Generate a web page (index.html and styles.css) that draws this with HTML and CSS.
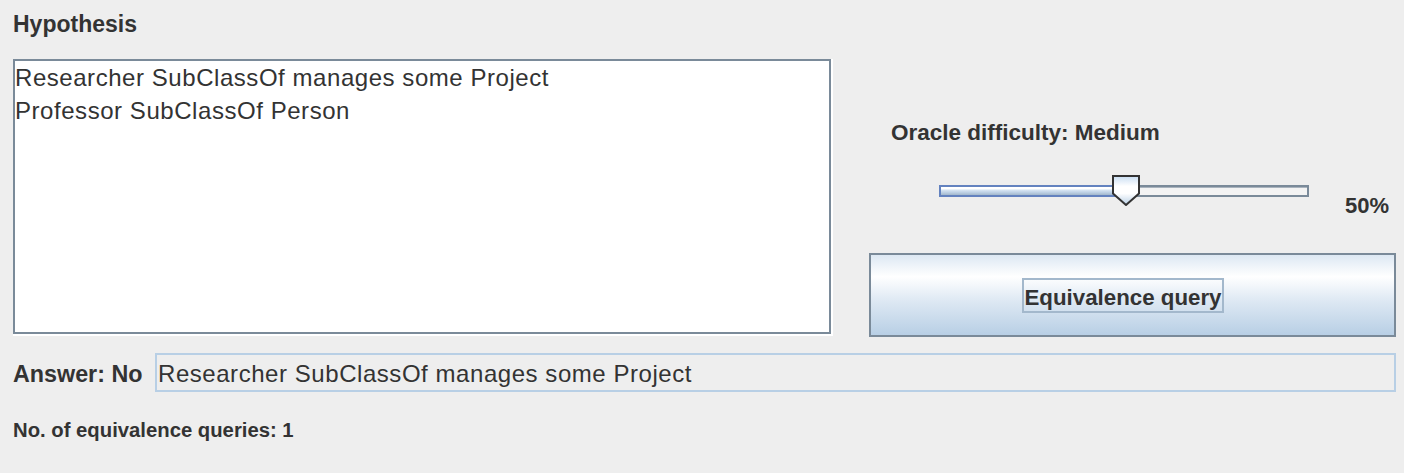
FILE: index.html
```html
<!DOCTYPE html>
<html>
<head>
<meta charset="utf-8">
<link rel="stylesheet" href="styles.css">
</head>
<body>
<div class="page">
  <div class="title">Hypothesis</div>
  <div class="main">
    <div class="ta-outer">
      <div class="ta">
        <div class="ta-line">Researcher SubClassOf manages some Project</div>
        <div class="ta-line">Professor SubClassOf Person</div>
      </div>
    </div>
    <div class="right">
      <div class="oracle">Oracle difficulty: Medium</div>
      <div class="slider-row">
        <div class="slider">
          <div class="track">
            <div class="track-fill"></div>
            <div class="track-rest"></div>
          </div>
          <svg class="thumb" width="28" height="31" viewBox="0 0 28 31">
            <defs>
              <linearGradient id="tg" x1="0" y1="0" x2="0" y2="1">
                <stop offset="0" stop-color="#c8ddf2"/>
                <stop offset="0.35" stop-color="#ffffff"/>
                <stop offset="0.6" stop-color="#ffffff"/>
                <stop offset="1" stop-color="#b8cfe5"/>
              </linearGradient>
            </defs>
            <polygon points="1,1 27,1 27,18.5 14,30 1,18.5" fill="url(#tg)" stroke="#333333" stroke-width="2" stroke-linejoin="miter"/>
          </svg>
        </div>
        <div class="pct">50%</div>
      </div>
      <div class="button"><span class="focus">Equivalence query</span></div>
    </div>
  </div>
  <div class="answer-row">
    <div class="answer-label">Answer: No</div>
    <div class="answer-field">Researcher SubClassOf manages some Project</div>
  </div>
  <div class="count">No. of equivalence queries: 1</div>
</div>
</body>
</html>
```

FILE: styles.css
```css
html, body {
  margin: 0;
  padding: 0;
  background: #eeeeee;
}
body {
  width: 1404px;
  height: 473px;
  overflow: hidden;
  font-family: "Liberation Sans", Arial, sans-serif;
  color: #333333;
}
.page {
  padding: 9px 8px 0 13px;
}
.title {
  font-weight: bold;
  font-size: 23px;
  line-height: 30px;
  height: 30px;
}
.main {
  display: flex;
  align-items: flex-start;
  margin-top: 20px;
}
.ta-outer {
  width: 820px;
  height: 277px;
  box-sizing: border-box;
  border-right: 2px solid #ffffff;
  border-bottom: 2px solid #ffffff;
  flex: none;
}
.ta {
  width: 100%;
  height: 100%;
  box-sizing: border-box;
  border: 2px solid #7a8a99;
  background: #ffffff;
  padding: 0;
}
.ta-line {
  font-size: 24px;
  letter-spacing: 0.55px;
  line-height: 33px;
  height: 33px;
  white-space: nowrap;
}
.right {
  margin-left: 36px;
  flex: 1;
  padding-top: 59px;
  display: flex;
  flex-direction: column;
}
.oracle {
  margin-left: 22px;
  font-weight: bold;
  font-size: 22.5px;
  line-height: 30px;
  height: 30px;
  white-space: nowrap;
}
.slider-row {
  height: 105px;
  display: flex;
  align-items: flex-start;
}
.slider {
  position: relative;
  margin-left: 70px;
  margin-top: 27px;
  width: 370px;
  height: 31px;
  flex: none;
}
.track {
  margin-top: 10px;
  height: 12px;
  display: flex;
}
.track-fill {
  width: 187px;
  box-sizing: border-box;
  border: 2px solid #6382bf;
  border-right: none;
  background: linear-gradient(to bottom, #ffffff 0%, #ffffff 20%, #d6e4f2 40%, #bfd2e6 65%, #a3b8cc 100%);
}
.track-rest {
  flex: 1;
  box-sizing: border-box;
  border: 2px solid #7a8a99;
  border-left: none;
  background: #f3f3f3;
  box-shadow: inset 0 1px 0 #a9b3bd;
}
.thumb {
  position: absolute;
  left: 173px;
  top: 0;
  display: block;
}
.pct {
  margin-left: 36px;
  margin-top: 45px;
  font-weight: bold;
  font-size: 22px;
  line-height: 26px;
  white-space: nowrap;
}
.button {
  height: 84px;
  box-sizing: border-box;
  border: 2px solid #7a8a99;
  background: linear-gradient(to bottom, #dde8f3 0%, #ffffff 27%, #dde8f3 58%, #b8cfe5 100%);
  display: flex;
  align-items: center;
  justify-content: center;
}
.focus {
  margin-right: 19px;
  border: 2px solid #a3b8cc;
  padding: 4px 0 0 0;
  height: 27px;
  line-height: 27px;
  font-weight: bold;
  font-size: 22.3px;
  white-space: nowrap;
}
.answer-row {
  display: flex;
  align-items: baseline;
  margin-top: 16px;
}
.answer-label {
  font-weight: bold;
  font-size: 23.3px;
  line-height: 30px;
  width: 142px;
  flex: none;
  white-space: nowrap;
}
.answer-field {
  flex: 1;
  height: 39px;
  box-sizing: border-box;
  border: 2px solid #b8cfe5;
  padding: 3px 0 0 1px;
  font-size: 24px;
  letter-spacing: 0.55px;
  line-height: 32px;
  white-space: nowrap;
}
.count {
  margin-top: 26px;
  font-weight: bold;
  font-size: 20.3px;
  line-height: 24px;
  white-space: nowrap;
}
```
